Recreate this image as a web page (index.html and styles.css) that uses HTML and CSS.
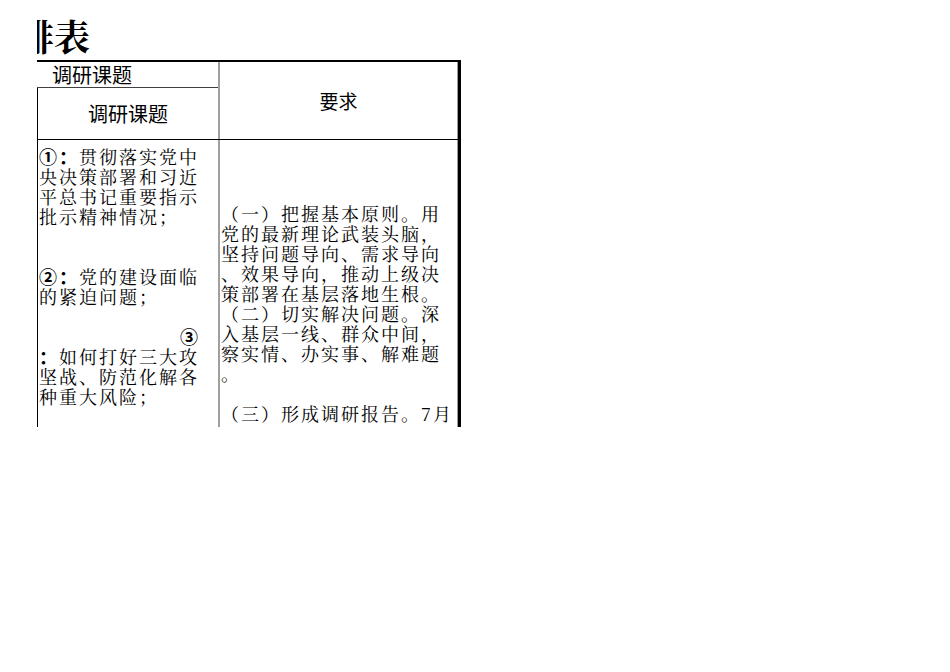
FILE: index.html
```html
<!DOCTYPE html>
<html lang="zh">
<head>
<meta charset="utf-8">
<title>调研课题安排表</title>
<link rel="stylesheet" href="styles.css">
</head>
<body>
<div class="page">
  <div class="sheet">
    <div class="title">排表</div>
    <div class="tbl">
      <div class="head">
        <div class="hcol">
          <div class="h1">调研课题</div>
          <div class="h2">调研课题</div>
        </div>
        <div class="hreq">要求</div>
      </div>
      <div class="body">
        <div class="cell left">
          <div class="ln"><span class="num">①：</span>贯彻落实党中</div>
          <div class="ln">央决策部署和习近</div>
          <div class="ln">平总书记重要指示</div>
          <div class="ln">批示精神情况；</div>
          <div class="ln blank"></div>
          <div class="ln blank"></div>
          <div class="ln"><span class="num">②：</span>党的建设面临</div>
          <div class="ln">的紧迫问题；</div>
          <div class="ln blank"></div>
          <div class="ln right"><span class="num">③</span></div>
          <div class="ln"><span class="num">：</span>如何打好三大攻</div>
          <div class="ln">坚战、防范化解各</div>
          <div class="ln">种重大风险；</div>
        </div>
        <div class="cell req">
          <div class="ln">（一）把握基本原则。用</div>
          <div class="ln">党的最新理论武装头脑，</div>
          <div class="ln">坚持问题导向、需求导向</div>
          <div class="ln">、效果导向，推动上级决</div>
          <div class="ln">策部署在基层落地生根。</div>
          <div class="ln">（二）切实解决问题。深</div>
          <div class="ln">入基层一线、群众中间，</div>
          <div class="ln">察实情、办实事、解难题</div>
          <div class="ln">。</div>
          <div class="ln blank"></div>
          <div class="ln">（三）形成调研报告。7月</div>
        </div>
      </div>
    </div>
  </div>
</div>
</body>
</html>
```
FILE: styles.css
```css
html, body {
  margin: 0;
  padding: 0;
  background: #fff;
}
.page {
  width: 950px;
  height: 672px;
  background: #fff;
  overflow: hidden;
}
.sheet {
  margin-left: 37px;
  width: 424px;
  height: 427px;
  overflow: hidden;
}
.title {
  height: 42px;
  padding-top: 18px;
  margin-left: -19px;
  font-family: "Noto Serif CJK SC", "Noto Sans CJK SC", serif;
  font-weight: 700;
  font-size: 36px;
  line-height: 36px;
  color: #000;
  white-space: nowrap;
}
.tbl {
  border-top: 2px solid #000;
  border-right: 3px solid #000;
  box-sizing: border-box;
  width: 424px;
  font-family: "Noto Sans CJK SC", sans-serif;
  color: #000;
}
.head {
  display: grid;
  grid-template-columns: 183px 1fr;
  border-bottom: 1px solid #000;
}
.hcol {
  border-right: 2px solid #a0a0a0;
}
.h1 {
  height: 25px;
  line-height: 25px;
  border-bottom: 1px solid #404040;
  padding-left: 15px;
  font-size: 20px;
}
.h2 {
  height: 51px;
  line-height: 51px;
  border-left: 1px solid #000;
  text-align: center;
  font-size: 20px;
}
.hreq {
  border-right: 1px solid #9a9a9a;
  display: flex;
  align-items: center;
  justify-content: center;
  font-size: 19px;
}
.body {
  display: grid;
  grid-template-columns: 183px 1fr;
  height: 400px;
}
.cell {
  font-family: "Noto Serif CJK SC", "Noto Sans CJK SC", serif;
  font-size: 18px;
  line-height: 20px;
  letter-spacing: 2px;
  white-space: nowrap;
}
.left {
  border-left: 1px solid #000;
  border-right: 2px solid #a0a0a0;
  padding: 6px 0 0 1px;
}
.req {
  border-right: 1px solid #9a9a9a;
  padding: 63px 0 0 1px;
}
.ln {
  height: 20px;
}
.ln.right {
  text-align: right;
  padding-right: 18px;
}
.num {
  font-family: "Liberation Sans", "Noto Sans CJK SC", sans-serif;
  font-weight: 700;
}
```
